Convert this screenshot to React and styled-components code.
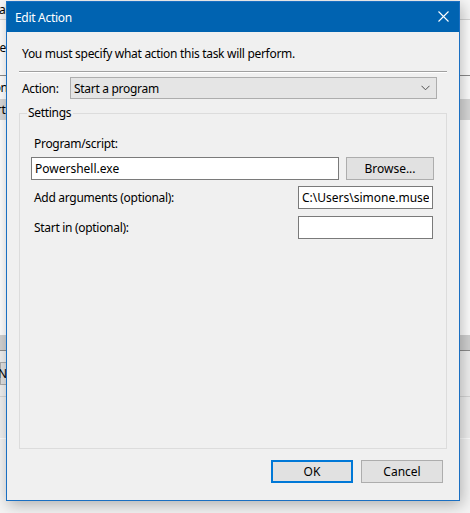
import styled, { createGlobalStyle } from "styled-components";

const GlobalStyle = createGlobalStyle`
  html, body {
    margin: 0;
    padding: 0;
    background: #f4f4f4;
    font-family: "Noto Sans", "Segoe UI", sans-serif;
    font-size: 12px;
    letter-spacing: -0.3px;
  }
  * { box-sizing: border-box; }
`;

const Screen = styled.div`
  position: relative;
  width: 470px;
  height: 513px;
  overflow: hidden;
`;

/* the Create Task window that sits behind the dialog */
const Backdrop = styled.div`
  display: flex;
  flex-direction: column;
  width: 470px;
  height: 439px;
  background: #fff;
`;

const Band = styled.div`
  display: flex;
  align-items: center;
  height: ${(p) => p.$h}px;
  flex: none;
  background: ${(p) => p.$bg || "transparent"};
  border-bottom: ${(p) => (p.$line ? `1px solid ${p.$line}` : "none")};
  overflow: hidden;
  white-space: nowrap;
  color: #000;
`;

const Clipped = styled.span`
  margin-left: ${(p) => p.$shift || 0}px;
`;

const BackButton = styled.div`
  height: 23px;
  width: ${(p) => p.$w}px;
  background: #e1e1e1;
  border: 1px solid #adadad;
  display: flex;
  align-items: center;
`;

const Dialog = styled.div`
  position: absolute;
  left: 6px;
  top: 1px;
  width: 454px;
  height: 500px;
  display: flex;
  flex-direction: column;
  background: #f0f0f0;
  border: 1px solid #1a6fc2;
  box-shadow: 2px 4px 14px rgba(0, 0, 0, 0.28);
`;

const TitleBar = styled.div`
  height: 30px;
  flex: none;
  display: flex;
  align-items: center;
  justify-content: space-between;
  padding: 0 10px 0 8px;
  background: #0063b1;
  color: #fff;
  font-size: 12px;
`;

const CloseButton = styled.svg`
  width: 11px;
  height: 11px;
  margin-top: -1px;
`;

const Body = styled.div`
  flex: 1;
  display: flex;
  flex-direction: column;
  padding: 14px 12px 17px 12px;
`;

const Intro = styled.div`
  line-height: 16px;
  margin-left: 3px;
`;

const Separator = styled.div`
  height: 2px;
  margin-top: 9px;
  border-top: 1px solid #a0a0a0;
  border-bottom: 1px solid #fff;
`;

const ActionRow = styled.div`
  display: flex;
  align-items: center;
  margin-top: 4px;
  padding-left: 3px;
`;

const ActionLabel = styled.span`
  width: 48px;
  flex: none;
`;

const Combo = styled.div`
  width: 367px;
  height: 22px;
  display: flex;
  align-items: center;
  justify-content: space-between;
  padding: 0 6px 0 3px;
  background: #e5e5e5;
  border: 1px solid #adadad;
`;

const Group = styled.fieldset`
  flex: 1;
  margin: 6px 0 0 0;
  padding: 15px 13px 0 11px;
  border: 1px solid #dcdcdc;
  min-width: 0;
`;

const Legend = styled.legend`
  margin-left: -4px;
  padding: 0 2px 0 1px;
  line-height: 16px;
`;

const FieldLabel = styled.div`
  line-height: 16px;
  margin-left: 3px;
`;

const Row = styled.div`
  display: flex;
  align-items: center;
  justify-content: space-between;
  gap: 7px;
  margin-top: ${(p) => p.$top || 0}px;
`;

const TextBox = styled.input`
  width: ${(p) => p.$w}px;
  height: 23px;
  flex: none;
  margin: 0;
  padding: 0 3px;
  border: 1px solid #7a7a7a;
  background: #fff;
  font: inherit;
  color: #000;
  outline: none;
`;

const Button = styled.button`
  width: ${(p) => p.$w || 82}px;
  height: 23px;
  flex: none;
  margin: 0;
  padding: 0;
  font: inherit;
  color: #000;
  background: #e1e1e1;
  border: ${(p) => (p.$default ? "2px solid #0078d7" : "1px solid #adadad")};
`;

const Footer = styled.div`
  display: flex;
  justify-content: flex-end;
  gap: 8px;
  margin-top: 11px;
  padding-right: 4px;
`;

export default function App() {
  return (
    <Screen>
      <GlobalStyle />
      <Backdrop>
        <Band $h={20} $bg="#f7f7f7" $line="#d6d6d6">
          <Clipped $shift={-34}>General</Clipped>
        </Band>
        <Band $h={55}>
          <Clipped $shift={-28}>Trigger</Clipped>
        </Band>
        <Band $h={1} $bg="#8c8c8c" />
        <Band $h={23}>
          <Clipped $shift={-26}>Action</Clipped>
        </Band>
        <Band $h={21} $bg="#d9d9d9">
          <Clipped $shift={-20}>Start</Clipped>
        </Band>
        <Band $h={215} />
        <Band $h={16} $bg="#d2d2d2" $line="#8c8c8c" />
        <Band $h={46} $bg="#f0f0f0" $line="#d6d6d6">
          <BackButton $w={30}>
            <Clipped $shift={-3}>New...</Clipped>
          </BackButton>
        </Band>
        <Band $h={41} $bg="#f0f0f0" />
      </Backdrop>

      <Dialog>
        <TitleBar>
          <span>Edit Action</span>
          <CloseButton viewBox="0 0 11 11">
            <path d="M0.5 0.5 L10.5 10.5 M10.5 0.5 L0.5 10.5" stroke="#fff" strokeWidth="1.1" fill="none" />
          </CloseButton>
        </TitleBar>
        <Body>
          <Intro>You must specify what action this task will perform.</Intro>
          <Separator />
          <ActionRow>
            <ActionLabel>Action:</ActionLabel>
            <Combo>
              <span>Start a program</span>
              <svg width="9" height="6" viewBox="0 0 9 6">
                <path d="M0.5 0.8 L4.5 4.8 L8.5 0.8" stroke="#505050" strokeWidth="1" fill="none" />
              </svg>
            </Combo>
          </ActionRow>
          <Group>
            <Legend>Settings</Legend>
            <FieldLabel>Program/script:</FieldLabel>
            <Row $top={5}>
              <TextBox $w={308} defaultValue="Powershell.exe" />
              <Button $w={88}>Browse...</Button>
            </Row>
            <Row $top={6}>
              <FieldLabel>Add arguments (optional):</FieldLabel>
              <TextBox $w={135} defaultValue="C:\Users\simone.musetti\Documents\task.ps1" />
            </Row>
            <Row $top={7}>
              <FieldLabel>Start in (optional):</FieldLabel>
              <TextBox $w={135} defaultValue="" />
            </Row>
          </Group>
          <Footer>
            <Button $default>OK</Button>
            <Button>Cancel</Button>
          </Footer>
        </Body>
      </Dialog>
    </Screen>
  );
}
